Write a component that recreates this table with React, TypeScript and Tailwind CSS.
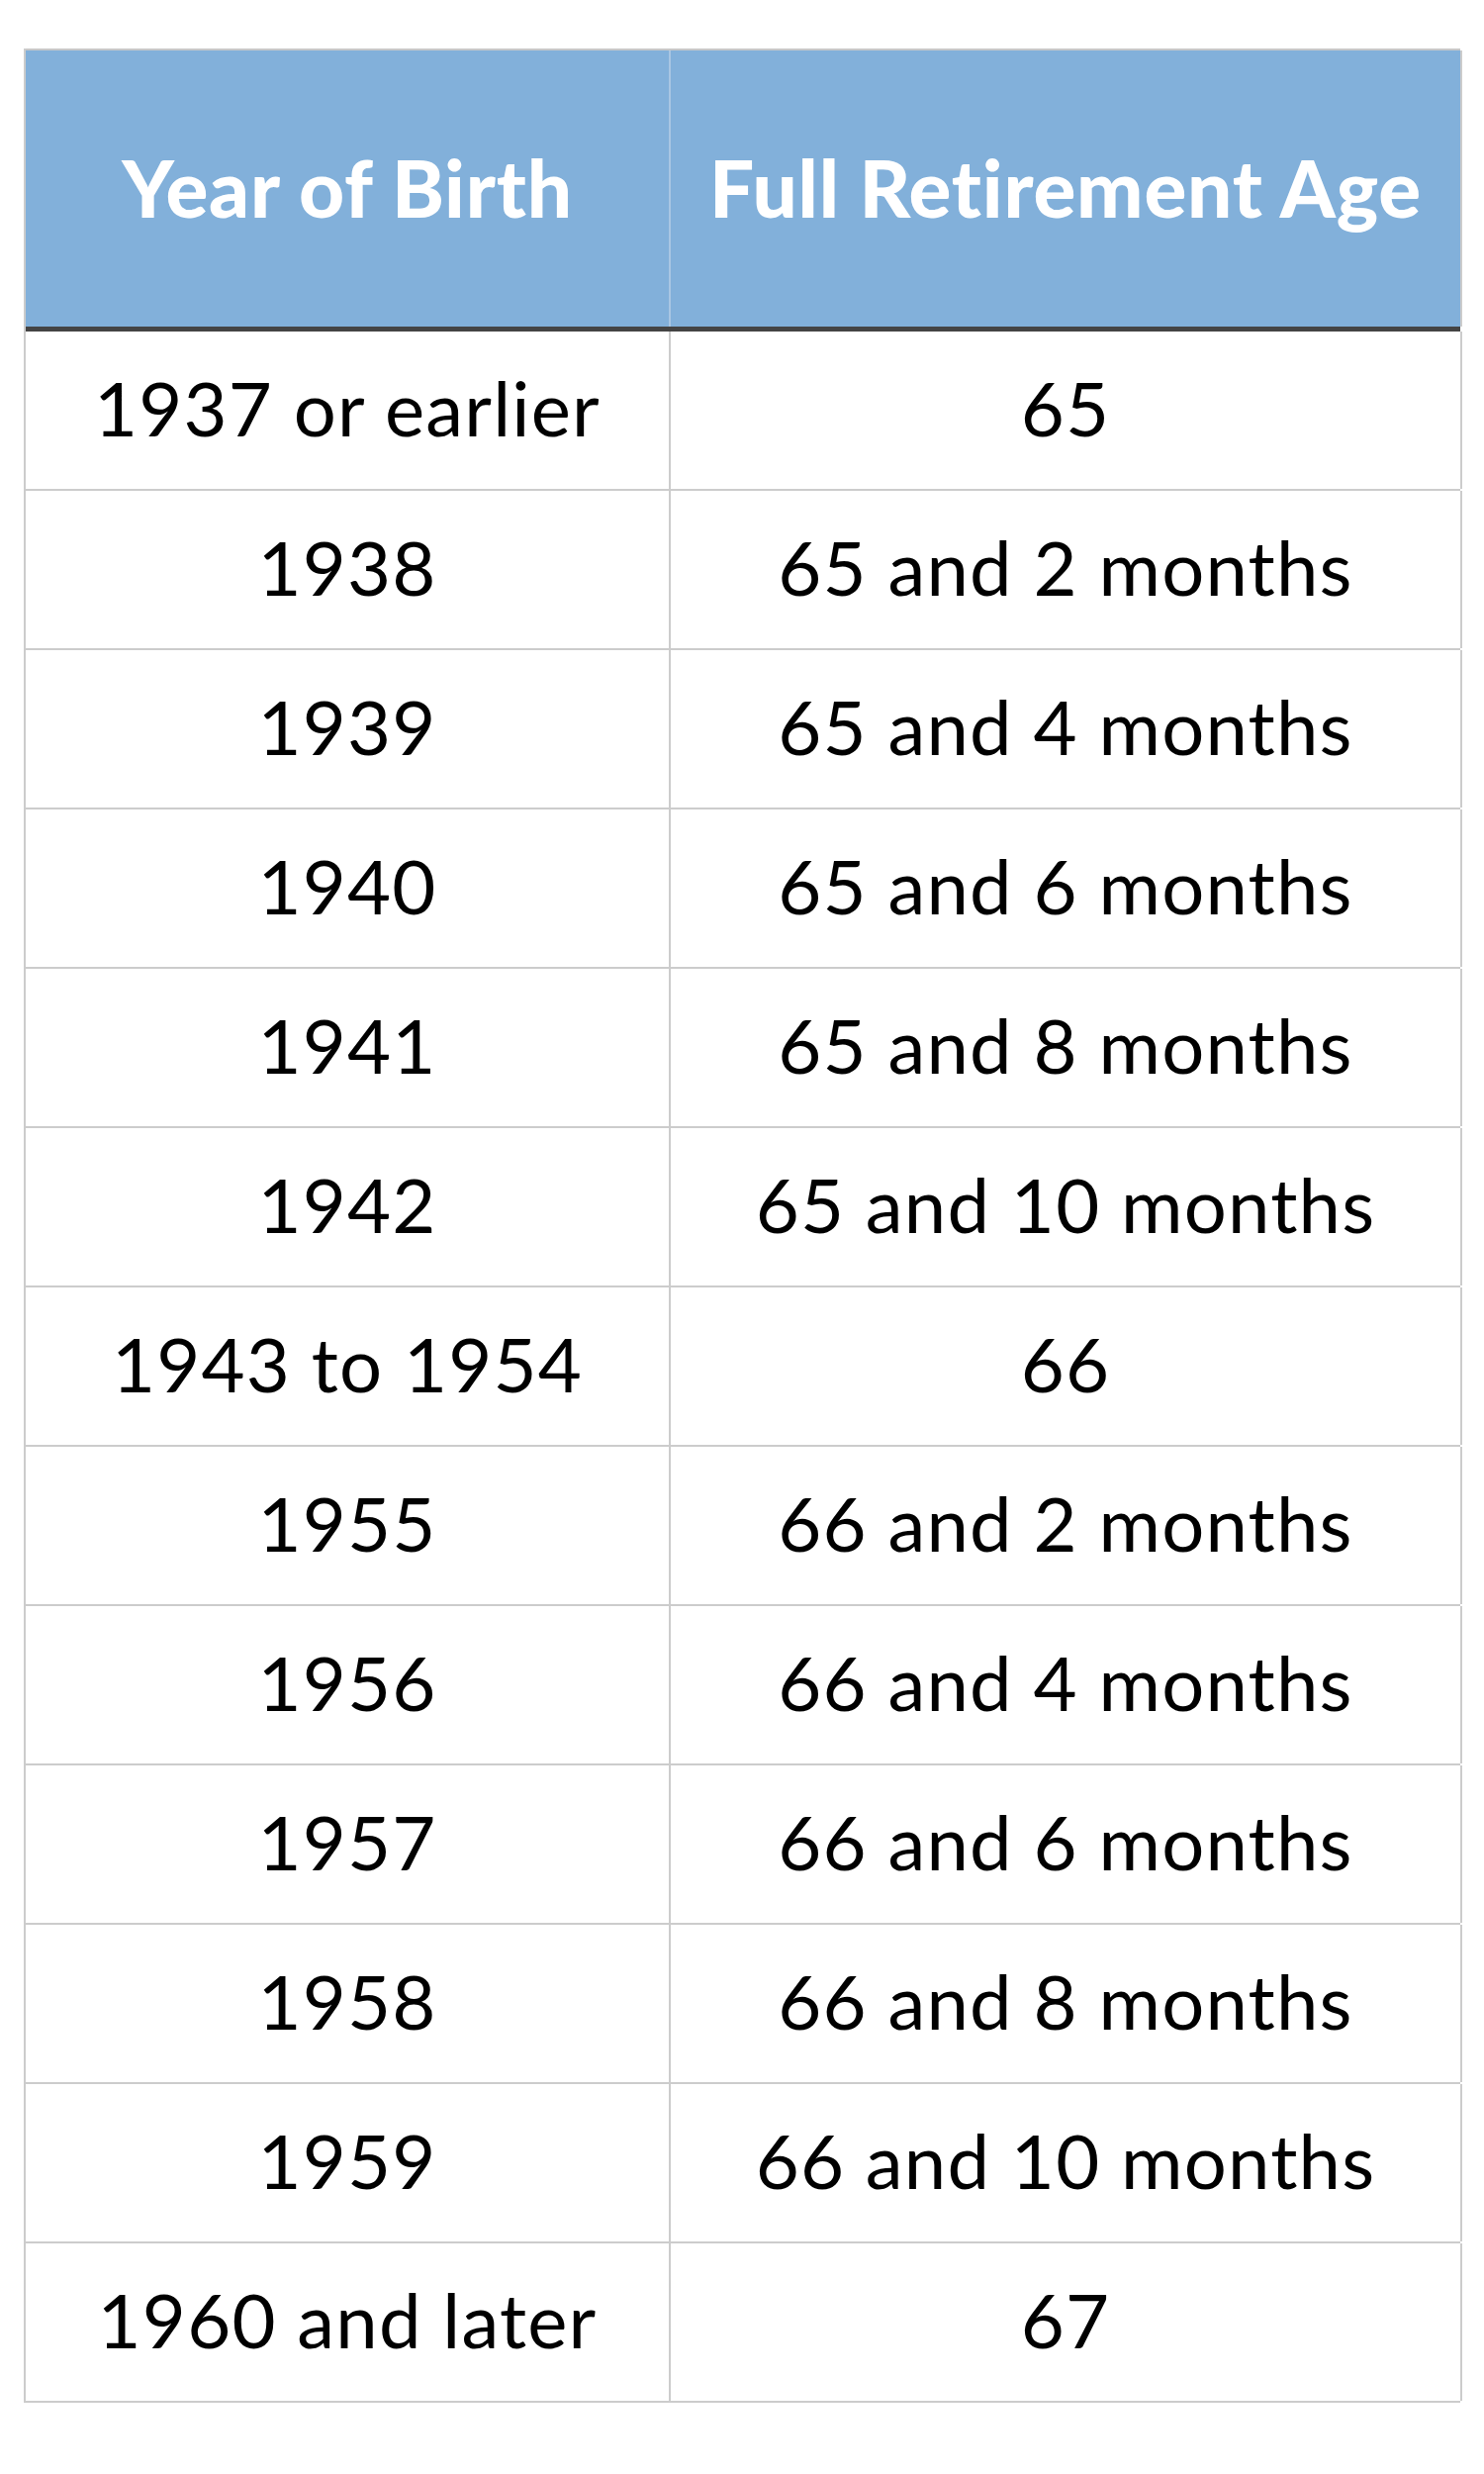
const rows: [string, string][] = [
  ["1937 or earlier", "65"],
  ["1938", "65 and 2 months"],
  ["1939", "65 and 4 months"],
  ["1940", "65 and 6 months"],
  ["1941", "65 and 8 months"],
  ["1942", "65 and 10 months"],
  ["1943 to 1954", "66"],
  ["1955", "66 and 2 months"],
  ["1956", "66 and 4 months"],
  ["1957", "66 and 6 months"],
  ["1958", "66 and 8 months"],
  ["1959", "66 and 10 months"],
  ["1960 and later", "67"],
];

export default function App() {
  return (
    <div className="min-h-[2500px] bg-white pl-[24px] pt-[49px] font-['Lato',sans-serif]">
      <div className="w-[1452px] border-l-2 border-[#cccccc]">
        {/* header */}
        <div className="grid grid-cols-[652px_800px] border-t-2 border-[#c8c8c8] border-b-[5px] border-b-[#444444] bg-[#82b0da]">
          <div className="flex h-[279px] items-center justify-center border-r-2 border-[#a9c6e3] pb-[4px] text-[80px] font-black tracking-[0.8px] text-white">
            Year of Birth
          </div>
          <div className="flex h-[279px] items-center justify-center border-r-2 border-[#cccccc] pb-[4px] text-[80px] font-black tracking-[0.8px] text-white">
            Full Retirement Age
          </div>
        </div>
        {rows.map((r) => (
          <div key={r[0]} className="grid h-[161px] grid-cols-[652px_800px] border-b-2 border-[#cccccc]">
            <div className="flex items-center justify-center border-r-2 border-[#cccccc] pb-[6px] text-[76px] tracking-[1.2px] text-black">
              {r[0]}
            </div>
            <div className="flex items-center justify-center border-r-2 border-[#cccccc] pb-[6px] text-[76px] tracking-[1.2px] text-black">
              {r[1]}
            </div>
          </div>
        ))}
      </div>
    </div>
  );
}
